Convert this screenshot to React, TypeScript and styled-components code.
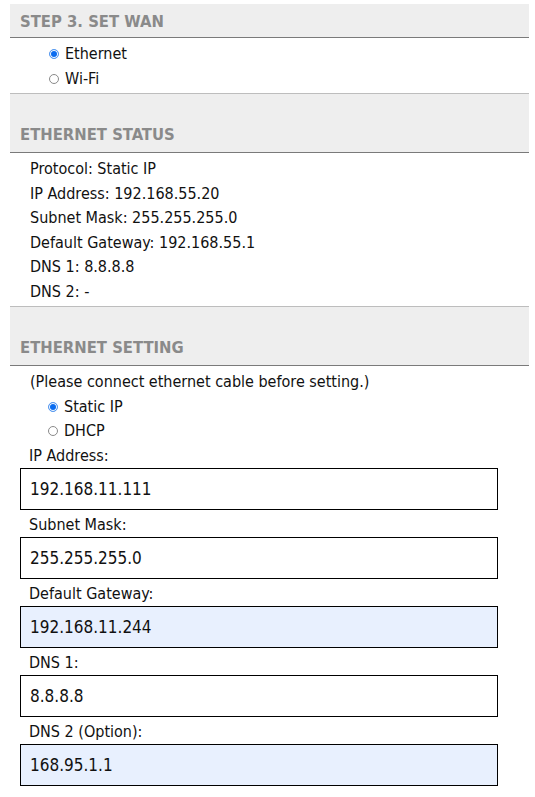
import React from 'react'
import styled, { createGlobalStyle } from 'styled-components'

const GlobalStyle = createGlobalStyle`
  body {
    margin: 0;
    background: #fff;
    font-family: "DejaVu Sans Condensed", "DejaVu Sans", sans-serif;
    color: #111;
  }
`

const Page = styled('div')`
  padding: 4px 6px 0 10px;
`

const SectionHeader = styled('div')<{ $tall?: boolean }>`
  background: #eeeeee;
  border-top: ${(p) => (p.$tall ? '1px solid #bdbdbd' : 'none')};
  border-bottom: 1px solid #7a7a7a;
  padding: ${(p) => (p.$tall ? '27px' : '4px')} 10px 0 10px;
  height: ${(p) => (p.$tall ? '31px' : '29px')};
  font-size: 16.5px;
  font-weight: bold;
  line-height: 28px;
  color: #8a8a8a;
`

const Block = styled('div')<{ $indent?: number; $tight?: boolean }>`
  padding: 4px 0 ${(p) => (p.$tight ? 0 : 2)}px ${(p) => p.$indent ?? 20}px;
  font-size: 16px;
  line-height: 24.5px;
`

const Line = styled('div')<{ $indent?: number }>`
  padding-left: ${(p) => p.$indent ?? 0}px;
`

const RadioRow = styled('label')<{ $indent: number }>`
  display: flex;
  align-items: center;
  gap: 6px;
  padding-left: ${(p) => p.$indent}px;
  height: 24.5px;
`

const Radio = styled('input')`
  appearance: none;
  margin: 0;
  width: 10px;
  height: 10px;
  border-radius: 50%;
  border: 1px solid #8a8a8a;
  background: #fff;

  &:checked {
    border-color: #5b9cf0;
    background: #0a6cf0;
    box-shadow: inset 0 0 0 1px #fff;
  }
`

const FieldLabel = styled('div')`
  padding-left: 9px;
  height: 24.5px;
  line-height: 24.5px;
  font-size: 16px;
`

const Field = styled('input')<{ $filled?: boolean }>`
  display: block;
  box-sizing: border-box;
  width: 478px;
  height: 42px;
  margin: 0 0 2.5px 0;
  padding: 0 9px;
  border: 1px solid #000;
  border-radius: 0;
  outline: none;
  background: ${(p) => (p.$filled ? '#e8f0fe' : '#fff')};
  font-family: "DejaVu Sans Condensed", "DejaVu Sans", sans-serif;
  font-size: 17px;
  color: #111;
`

const FieldWrap = styled('div')`
  padding-left: 10px;
`

const status = [
  'Protocol: Static IP',
  'IP Address: 192.168.55.20',
  'Subnet Mask: 255.255.255.0',
  'Default Gateway: 192.168.55.1',
  'DNS 1: 8.8.8.8',
  'DNS 2: -',
]

const fields = [
  { label: 'IP Address:', value: '192.168.11.111' },
  { label: 'Subnet Mask:', value: '255.255.255.0' },
  { label: 'Default Gateway:', value: '192.168.11.244', filled: true },
  { label: 'DNS 1:', value: '8.8.8.8' },
  { label: 'DNS 2 (Option):', value: '168.95.1.1', filled: true },
]

const App: React.FC = () => {
  return (
    <Page>
      <GlobalStyle />
      <SectionHeader>STEP 3. SET WAN</SectionHeader>
      <Block $indent={0}>
        <RadioRow $indent={39}>
          <Radio type="radio" name="wan" defaultChecked />
          Ethernet
        </RadioRow>
        <RadioRow $indent={39}>
          <Radio type="radio" name="wan" />
          Wi-Fi
        </RadioRow>
      </Block>

      <SectionHeader $tall>ETHERNET STATUS</SectionHeader>
      <Block>
        {status.map((s) => (
          <Line key={s}>{s}</Line>
        ))}
      </Block>

      <SectionHeader $tall>ETHERNET SETTING</SectionHeader>
      <Block $indent={0} $tight>
        <Line $indent={20}>(Please connect ethernet cable before setting.)</Line>
        <RadioRow $indent={38}>
          <Radio type="radio" name="proto" defaultChecked />
          Static IP
        </RadioRow>
        <RadioRow $indent={38}>
          <Radio type="radio" name="proto" />
          DHCP
        </RadioRow>
      </Block>
      <FieldWrap>
        {fields.map((f) => (
          <div key={f.label}>
            <FieldLabel>{f.label}</FieldLabel>
            <Field defaultValue={f.value} $filled={f.filled} />
          </div>
        ))}
      </FieldWrap>
    </Page>
  )
}

export default App
